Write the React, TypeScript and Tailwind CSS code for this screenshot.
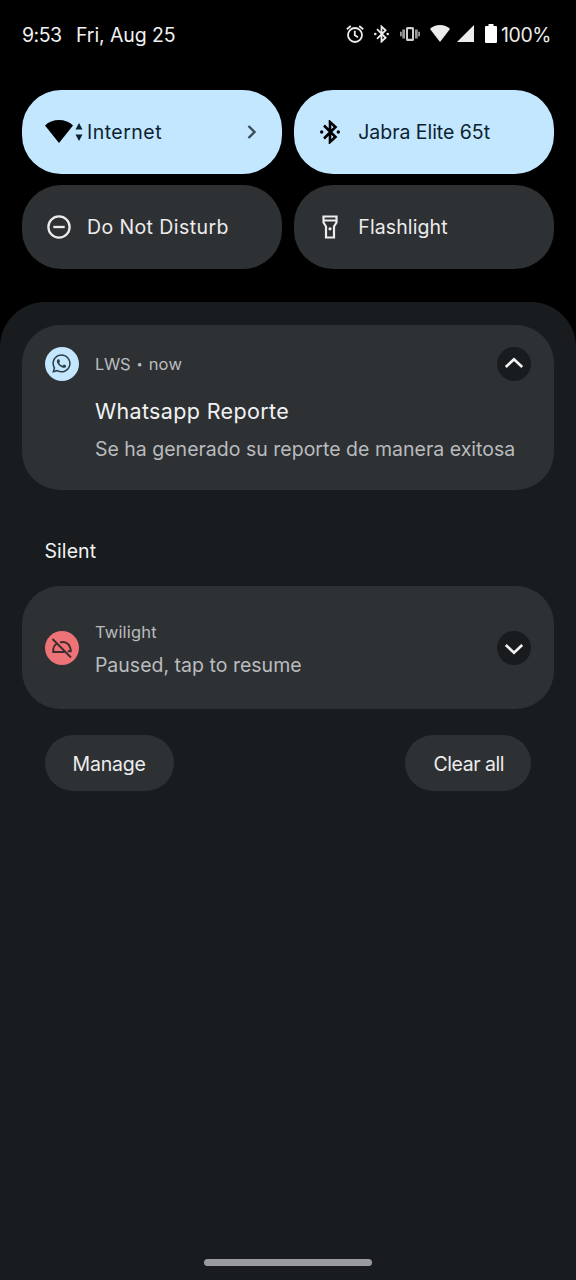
import type { ReactNode } from "react";
import { FaWhatsapp } from "react-icons/fa";

function Bluetooth({ className, weight }: { className: string; weight: number }) {
  return (
    <svg viewBox="0 0 20 24" className={className} fill="none" stroke="currentColor" strokeWidth={weight}>
      <path d="M4 5.5 15.5 17 10 22V2l5.500 5L4 18.500" />
      <circle cx="1.700" cy="12" r="1.700" fill="currentColor" stroke="none" />
      <circle cx="18.300" cy="12" r="1.700" fill="currentColor" stroke="none" />
    </svg>
  );
}

function Wifi({ className }: { className: string }) {
  return (
    <svg viewBox="0 0 24 20" preserveAspectRatio="none" className={className} fill="currentColor">
      <path d="M12 0C7.300 0 3.100 1.600 0 4.800L12 20 24 4.800C20.900 1.600 16.700 0 12 0z" />
    </svg>
  );
}

function StatusBar() {
  return (
    <header className="flex h-[69px] items-center pl-[22px] pr-[25px] pt-[2px] text-[19.5px] text-[#f1f1f1]">
      <span className="w-[54px] tracking-[-0.5px]">9:53</span>
      <span className="tracking-[-0.1px]">Fri, Aug 25</span>
      <div className="ml-auto flex items-center text-[#ececec]">
        <svg viewBox="0 0 18 18" className="-mt-[4px] mr-[10px] h-[18px] w-[18px]" fill="none" stroke="currentColor" strokeWidth="1.800">
          <circle cx="9" cy="10" r="7" />
          <path d="M8.800 5.800v4.500l3.200 2M.8 4.300 4.800 1M17.200 4.300 13.200 1" />
        </svg>
        <Bluetooth className="-mt-[4px] mr-[11px] h-[18px] w-[15px]" weight={2.4} />
        <svg viewBox="0 0 20 16" className="-mt-[4px] mr-[10px] h-4 w-5 text-[#cfcfcf]" fill="currentColor">
          <path fillRule="evenodd" d="M7.500 1h5q1.500 0 1.500 1.500v11q0 1.500-1.500 1.500h-5Q6 15 6 13.500v-11Q6 1 7.500 1zM8 3.300v9.400h4V3.300z" />
          <path opacity=".75" d="M2.300 3.500H5v9H2.300zM15 3.500h2.700v9H15zM0 5.800h1.800v4.400H0zM18.200 5.800H20v4.400h-1.800z" />
        </svg>
        <Wifi className="-mt-[5px] mr-[7px] h-[17px] w-[20px]" />
        <svg viewBox="0 0 17 17" className="-mt-[5px] mr-[11px] h-[17px] w-[17px]" fill="currentColor">
          <path d="M0 17h17V0z" />
        </svg>
        <svg viewBox="0 0 12 19" className="-mt-[4px] mr-[4px] h-[19px] w-3 text-white" fill="currentColor">
          <path d="M3.500 0h5v2H11q1 0 1 1v15q0 1-1 1H1q-1 0-1-1V3q0-1 1-1h2.500z" />
        </svg>
        <span className="w-[50px] tracking-[-0.4px]">100%</span>
      </div>
    </header>
  );
}

function Tile({ active, icon, label, children }: { active?: boolean; icon: ReactNode; label: ReactNode; children?: ReactNode }) {
  return (
    <div
      className={
        active
          ? "flex h-[84px] items-center rounded-[39px] bg-[#c2e7ff] pl-[22.5px] pr-[25px] text-[#0d2230]"
          : "flex h-[84px] items-center rounded-[39px] bg-[#2e3133] pl-[22.5px] pr-[25px] text-[#ececee]"
      }
    >
      <div className="flex w-[42px] shrink-0 items-center">{icon}</div>
      <div className="pt-[2px]">{label}</div>
      {children}
    </div>
  );
}

function Chevron({ up }: { up?: boolean }) {
  return (
    <div className="flex h-[34px] w-[34px] shrink-0 items-center justify-center rounded-full bg-[#191c1e]">
      <svg viewBox="0 0 20 12" className={up ? "-mt-[2px] h-3 w-5" : "mt-[2px] h-3 w-5"} fill="none" stroke="#f4f4f4" strokeWidth="2.600">
        <path d={up ? "M1.800 10 10 2.200 18.200 10" : "M1.800 2 10 9.800 18.200 2"} />
      </svg>
    </div>
  );
}

export default function App() {
  return (
    <div className="flex h-[1280px] w-[576px] flex-col overflow-hidden bg-black font-['Inter',sans-serif]">
      <StatusBar />
      <section className="mt-[20.500px] grid grid-cols-2 gap-x-[11.500px] gap-y-[11px] pl-[22.400px] pr-[22.400px] text-[19.500px]">
        <Tile
          active
          icon={
            <>
              <Wifi className="h-[23px] w-[28px] text-black" />
              <svg viewBox="0 0 8 20" className="ml-[2px] h-5 w-2" fill="currentColor">
                <path d="M.5 7.500 4 1l3.500 6.500zM.5 12.500 4 19l3.500-6.500z" />
              </svg>
            </>
          }
          label={<span className="tracking-[0.5px]">Internet</span>}
        >
          <svg viewBox="0 0 10 16" className="ml-auto h-4 w-[10px]" fill="none" stroke="#3c4b57" strokeWidth="2.400">
            <path d="m1.500 2 6 6-6 6" />
          </svg>
        </Tile>
        <Tile
          active
          icon={<Bluetooth className="ml-[3.7px] h-[24px] w-[20px] text-black" weight={2.6} />}
          label={<span className="tracking-[-0.04px]">Jabra Elite 65t</span>}
        />
        <Tile
          icon={
            <svg viewBox="0 0 24 24" className="ml-[2px] h-6 w-6" fill="none" stroke="currentColor" strokeWidth="2.300">
              <circle cx="12" cy="12" r="10.600" />
              <path d="M6.300 12h11.400" />
            </svg>
          }
          label={<span className="tracking-[0.42px]">Do Not Disturb</span>}
        />
        <Tile
          icon={
            <svg viewBox="0 0 16 24" className="ml-[5.7px] h-6 w-4" fill="none" stroke="currentColor" strokeWidth="2.200">
              <path d="M1.500 1.500h13v6l-2.500 4V22.500H4v-11L1.500 7.500zM1.500 5.500h13" />
              <circle cx="8" cy="13.800" r="1.600" fill="currentColor" stroke="none" />
            </svg>
          }
          label={<span className="tracking-[0.12px]">Flashlight</span>}
        />
      </section>

      <main className="mt-[33.400px] flex flex-1 flex-col rounded-t-[45px] bg-[#191c1e] pl-[22.400px] pr-[22.400px] pt-[22.700px]">
        <article className="flex h-[165.500px] items-start rounded-[38px] bg-[#2e3133] px-[22.300px] pt-[22.300px]">
          <div className="flex h-[34px] w-[34px] shrink-0 items-center justify-center rounded-full bg-[#c2e7ff]">
            <FaWhatsapp className="h-[21px] w-[21px] text-[#2e3d47]" />
          </div>
          <div className="ml-[16.200px] flex-1 whitespace-nowrap">
            <p className="flex h-[34px] gap-[6px] text-[16.500px] leading-[35px] text-[#babcbf]">
              <span className="tracking-[-0.2px]">LWS</span>
              <span className="text-[11px]">•</span>
              <span className="tracking-[0.2px]">now</span>
            </p>
            <h2 className="mt-[15px] h-[30px] text-[21.500px] leading-[31px] text-[#f2f2f3]">
              <span className="tracking-[0.36px]">Whatsapp Reporte</span>
            </h2>
            <p className="mt-[8px] h-[28px] w-0 text-[19.500px] leading-[31px] text-[#b9bbbe]">
              <span className="tracking-[0.01px]">Se ha generado su reporte de manera exitosa</span>
            </p>
          </div>
          <Chevron up />
        </article>

        <h3 className="mt-[46px] h-[30px] pl-[22px] text-[19.500px] leading-[30px] text-[#f2f2f3]">
          <span className="tracking-[0.1px]">Silent</span>
        </h3>

        <article className="mt-[20.200px] flex h-[123px] items-center rounded-[38px] bg-[#2e3133] px-[22.300px] pt-px">
          <div className="h-[34px] w-[34px] shrink-0 rounded-full bg-[#ed7376]">
            <svg viewBox="0 0 34 34" className="h-full w-full" fill="none" stroke="#3b2c2e" strokeWidth="1.900">
              <path d="M7.500 8 26 26.500M19.500 21H8.200c-.3-4 1-7 4-8.500M15 11.500c5.500-2 10.500 2 10.800 8.800h-3" />
            </svg>
          </div>
          <div className="ml-[16.200px] flex-1">
            <p className="h-[30px] text-[16.500px] leading-[31px] text-[#babcbf]">
              <span className="tracking-[0.2px]">Twilight</span>
            </p>
            <p className="mt-[3px] h-[30px] text-[19.500px] leading-[31px] text-[#babcbf]">
              <span className="tracking-[0.01px]">Paused, tap to resume</span>
            </p>
          </div>
          <Chevron />
        </article>

        <div className="mt-[25.700px] flex justify-between px-[22.300px] text-[19.500px] text-[#ececee]">
          <button className="h-[56px] w-[129px] rounded-[28px] bg-[#2e3133] pt-[3px]">
            <span className="tracking-[-0.2px]">Manage</span>
          </button>
          <button className="h-[56px] w-[126px] rounded-[28px] bg-[#2e3133] pl-px pt-[3px]">
            <span className="tracking-[-0.45px]">Clear all</span>
          </button>
        </div>

        <div className="mx-auto mb-[14px] mt-auto h-[7px] w-[168px] rounded-full bg-[#999b9f]" />
      </main>
    </div>
  );
}
